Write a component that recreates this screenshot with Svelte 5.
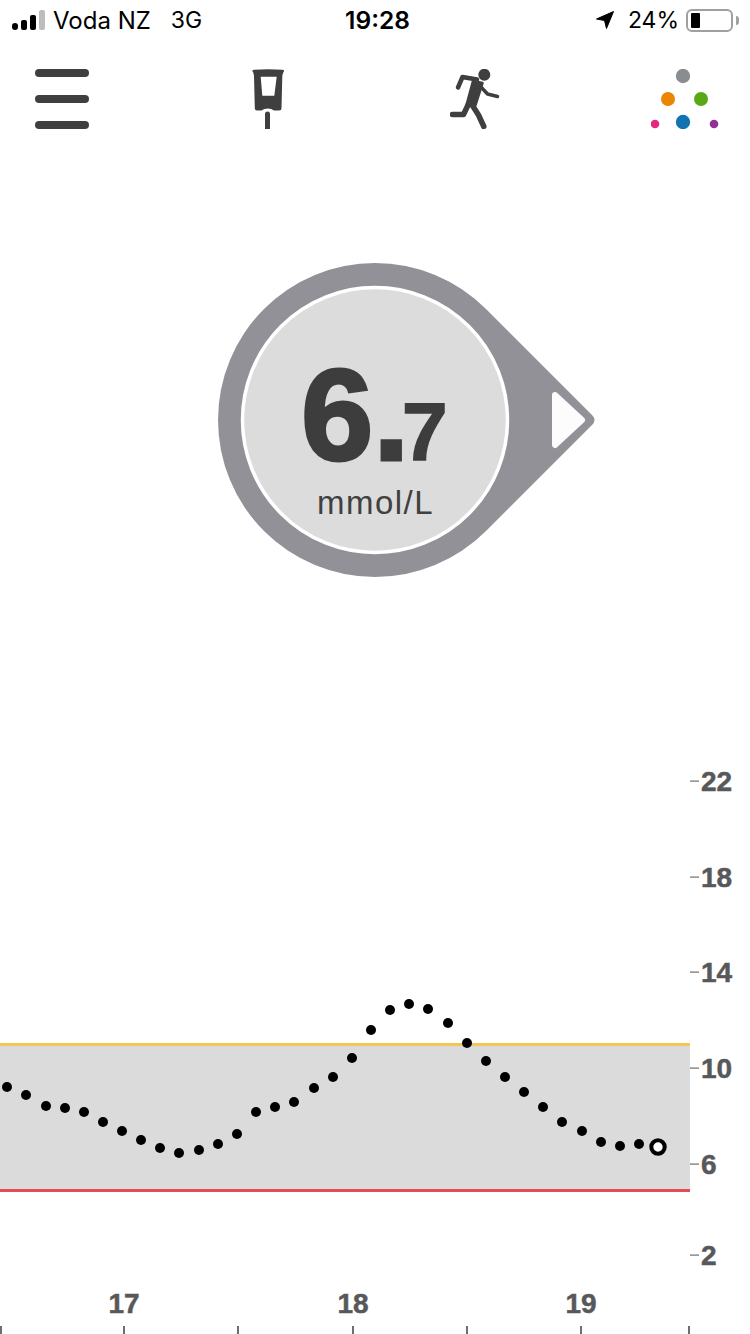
<script lang="ts">
	const dots = [
		[7, 1087], [26, 1095], [46, 1106], [65, 1108], [84, 1112], [103, 1122], [122, 1131], [141, 1140],
		[160, 1148], [179, 1153], [199, 1150], [218, 1144], [237, 1134], [256, 1112], [275, 1107], [294, 1102],
		[314, 1088], [333, 1077], [352, 1058], [371, 1030], [390, 1010], [409, 1004], [428, 1009], [448, 1023],
		[467, 1043], [486, 1061], [505, 1077], [524, 1092], [543, 1107], [562, 1122], [582, 1131], [601, 1142],
		[620, 1146], [639, 1144]
	];
	const yAxis = [
		{ label: '22', y: 781 },
		{ label: '18', y: 877 },
		{ label: '14', y: 972 },
		{ label: '10', y: 1068 },
		{ label: '6', y: 1164 },
		{ label: '2', y: 1255 }
	];
	const xTicks = [1, 124, 238, 353, 467, 581, 689];
	const xLabels = [
		{ label: '17', x: 124 },
		{ label: '18', x: 353 },
		{ label: '19', x: 581 }
	];
</script>

<div class="screen">
	<header class="status">
		<div class="status-left">
			<div class="signal">
				<span class="bar b1"></span>
				<span class="bar b2"></span>
				<span class="bar b3"></span>
				<span class="bar b4"></span>
			</div>
			<span>Voda NZ</span>
			<span class="net">3G</span>
		</div>
		<div class="time">19:28</div>
		<div class="status-right">
			<svg class="arrow" width="18" height="18" viewBox="0 0 18 18">
				<path d="M0.500 8 L17.500 0.500 L10.500 17.500 L8.500 9.500 Z" fill="#000" stroke="#000" stroke-width="1" stroke-linejoin="round" />
			</svg>
			<span class="pct">24%</span>
			<div class="battery"><span class="fill"></span></div>
			<span class="nub"></span>
		</div>
	</header>

	<nav class="nav">
		<div class="menu">
			<span></span>
			<span></span>
			<span></span>
		</div>
		<svg class="meter" width="32" height="60" viewBox="252 69 32 60">
			<path
				fill-rule="evenodd"
				fill="#3f3f3f"
				d="M252.300 71 Q252.300 70 254 69.800 Q268 68.800 282.500 69.800 Q284.300 70 284.300 71 Q282.500 73 282.300 76 L281.500 108 Q281.500 110.500 279 110.500 L274 110.500 Q271.500 108.500 267.800 108.500 Q264 108.500 261.500 110.500 L257 110.500 Q254.800 110.500 254.800 108 L254 76 Q254 73 252.300 71 Z M260.700 76.700 L276.700 76.700 L274.300 95.700 L262.300 95.700 Z"
			/>
			<path d="M265 129 L265 114 Q265 111.500 267.500 111.500 Q270 111.500 270 114 L270 129 Z" fill="#3f3f3f" />
		</svg>
		<svg class="runner" width="50" height="60" viewBox="450 69 50 60">
			<circle cx="484.300" cy="74.800" r="6" fill="#3f3f3f" />
			<path d="M473 81 L482.500 83 L475.500 105 L466.500 105 Z" fill="#3f3f3f" stroke="#3f3f3f" stroke-width="2.500" stroke-linejoin="round" />
			<g fill="none" stroke="#3f3f3f" stroke-linecap="round" stroke-linejoin="round">
				<path d="M477 79.500 L462.500 77 L458 87.500" stroke-width="4.500" />
				<path d="M481 87 L487.500 94 L497.500 96.500" stroke-width="3.500" />
				<path d="M469 103 L463.500 114.500 L452.500 114.500" stroke-width="5.500" />
				<path d="M471.500 104 L478.500 115 L483.800 126.500" stroke-width="5.500" />
			</g>
		</svg>
		<svg class="logo" width="68" height="60" viewBox="651 69 68 60">
			<circle cx="683" cy="76" r="7.200" fill="#8a8d90" />
			<circle cx="668" cy="99" r="7" fill="#ec8500" />
			<circle cx="701" cy="99" r="7" fill="#5aa816" />
			<circle cx="683" cy="122" r="7.200" fill="#1273b3" />
			<circle cx="655" cy="124" r="4.300" fill="#e6287d" />
			<circle cx="714" cy="124" r="4.300" fill="#923096" />
		</svg>
	</nav>

	<section class="gauge">
		<svg width="442" height="320" viewBox="154 260 442 320">
			<path d="M486 309 L592 415 Q597 420 592 425 L486 531 A157 157 0 1 1 486 309 Z" fill="#929197" />
			<circle cx="375" cy="420" r="132.500" fill="#dcdcdc" stroke="#fff" stroke-width="3.500" />
			<path d="M555 395 L582 420 L555 445 Z" fill="#fcfcfc" stroke="#fcfcfc" stroke-width="6" stroke-linejoin="round" />
			<text class="reading" y="460">
				<tspan class="big" x="301">6.</tspan><tspan class="small" x="402">7</tspan>
			</text>
			<text class="unit" x="375.500" y="514" text-anchor="middle">mmol/L</text>
		</svg>
	</section>

	<section class="chart">
		<svg width="750" height="574" viewBox="0 760 750 574">
			<rect x="0" y="1045" width="690" height="145" fill="#dbdbdb" />
			<rect x="0" y="1043" width="690" height="3" fill="#f4c752" />
			<rect x="0" y="1189" width="690" height="3" fill="#e64a55" />

			{#each dots as [cx, cy]}
				<circle {cx} {cy} r="5" fill="#000" />
			{/each}
			<circle cx="658" cy="1147" r="6.700" fill="#fff" stroke="#000" stroke-width="4" />

			{#each yAxis as t}
				<rect x="690" y={t.y - 0.5} width="9" height="1.200" fill="#6e6e70" />
				<text class="axis" x="701" y={t.y + 10}>{t.label}</text>
			{/each}

			{#each xTicks as x}
				<rect x={x - 1} y="1326" width="2" height="8" fill="#6e6e70" />
			{/each}
			{#each xLabels as t}
				<text class="axis" x={t.x} y="1313" text-anchor="middle">{t.label}</text>
			{/each}
		</svg>
	</section>
</div>

<style>
	:global(body) { background: #fff; }

	.screen {
		width: 750px;
		height: 1334px;
		display: flex;
		flex-direction: column;
		overflow: hidden;
		background: #fff;
		font-family: 'Inter', 'Liberation Sans', sans-serif;
	}

	.status {
		height: 40px;
		display: grid;
		grid-template-columns: 1fr auto 1fr;
		align-items: center;
		padding: 0 11px 0 12px;
		font-size: 24px;
		color: #000;
	}
	.status-left { display: flex; align-items: center; }
	.signal { display: flex; align-items: flex-end; gap: 3px; height: 20px; margin-right: 8px; }
	.bar { width: 6px; border-radius: 2px; background: #000; }
	.b1 { height: 7px; border-radius: 3px; }
	.b2 { height: 10px; }
	.b3 { height: 15px; }
	.b4 { height: 20px; background: #bdbdbd; }
	.net { margin-left: 20px; font-size: 23px; }
	.time { font-weight: 600; font-size: 24.500px; margin-left: 4px; }
	.status-right { display: flex; align-items: center; justify-content: flex-end; }
	.arrow { margin-right: 14px; }
	.pct { margin-right: 7px; font-size: 23px; }
	.battery {
		width: 47px;
		height: 23px;
		box-sizing: border-box;
		border: 2px solid #a0a0a0;
		border-radius: 6px;
		padding: 2px 3px;
		display: flex;
	}
	.fill { width: 9px; background: #000; border-radius: 1px; }
	.nub { width: 3px; height: 9px; margin-left: 3px; background: #a0a0a0; border-radius: 0 3px 3px 0; }

	.nav { display: flex; align-items: flex-start; padding: 29px 0 0 35px; }
	.menu { width: 54px; height: 60px; display: flex; flex-direction: column; justify-content: space-between; }
	.menu span { height: 8px; border-radius: 4px; background: #3f3f3f; }
	.meter { margin-left: 163px; }
	.runner { margin-left: 166px; }
	.logo { margin-left: 151px; }

	.gauge { display: flex; padding: 131px 0 0 154px; }
	.reading { font-family: 'Liberation Sans', sans-serif; font-weight: 700; fill: #3d3d3d; stroke: #3d3d3d; }
	.big { font-size: 130px; stroke-width: 3px; }
	.small { font-size: 82px; stroke-width: 1.500px; }
	.unit { font-family: 'Liberation Sans', sans-serif; font-size: 33px; letter-spacing: 1.500px; fill: #404040; }

	.chart { margin-top: auto; display: flex; }
	.axis { font-family: 'Liberation Sans', sans-serif; font-weight: 700; font-size: 28px; fill: #58585a; stroke: #58585a; stroke-width: 0.500px; }
</style>
